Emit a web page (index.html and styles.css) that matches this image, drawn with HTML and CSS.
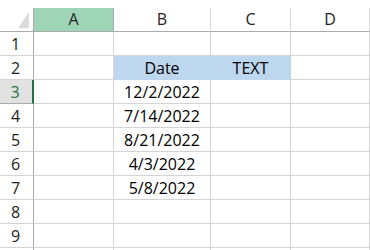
FILE: index.html
```html
<!DOCTYPE html>
<html>
<head>
<meta charset="utf-8">
<link rel="stylesheet" href="styles.css">
</head>
<body>
<div class="sheet">
  <div class="corner"><span class="tri"></span></div>
  <div class="colhdr sel">A</div>
  <div class="colhdr">B</div>
  <div class="colhdr">C</div>
  <div class="colhdr">D</div>

  <div class="rowhdr">1</div>
  <div class="cell"></div><div class="cell"></div><div class="cell"></div><div class="cell"></div>

  <div class="rowhdr">2</div>
  <div class="cell"></div><div class="cell blue">Date</div><div class="cell blue">TEXT</div><div class="cell"></div>

  <div class="rowhdr active">3</div>
  <div class="cell"></div><div class="cell">12/2/2022</div><div class="cell"></div><div class="cell"></div>

  <div class="rowhdr">4</div>
  <div class="cell"></div><div class="cell">7/14/2022</div><div class="cell"></div><div class="cell"></div>

  <div class="rowhdr">5</div>
  <div class="cell"></div><div class="cell">8/21/2022</div><div class="cell"></div><div class="cell"></div>

  <div class="rowhdr">6</div>
  <div class="cell"></div><div class="cell">4/3/2022</div><div class="cell"></div><div class="cell"></div>

  <div class="rowhdr">7</div>
  <div class="cell"></div><div class="cell">5/8/2022</div><div class="cell"></div><div class="cell"></div>

  <div class="rowhdr">8</div>
  <div class="cell"></div><div class="cell"></div><div class="cell"></div><div class="cell"></div>

  <div class="rowhdr">9</div>
  <div class="cell"></div><div class="cell"></div><div class="cell"></div><div class="cell"></div>

  <div class="rowhdr"></div>
  <div class="cell"></div><div class="cell"></div><div class="cell"></div><div class="cell"></div>
</div>
</body>
</html>
```
FILE: styles.css
```css
html, body {
  margin: 0;
  padding: 0;
  background: #ffffff;
  overflow: hidden;
}
body {
  width: 370px;
  height: 250px;
}
.sheet {
  box-sizing: border-box;
  height: 250px;
  overflow: hidden;
  padding-top: 8px;
  display: grid;
  grid-template-columns: 34px 80px 97px 80px 79px;
  grid-auto-rows: 24px;
  font-family: "Open Sans", "Noto Sans", sans-serif;
  font-size: 16px;
  color: #000;
}
.sheet > div {
  box-sizing: border-box;
}
.corner {
  border-right: 1px solid #ababab;
  border-bottom: 1px solid #ababab;
  position: relative;
}
.tri {
  position: absolute;
  right: 4px;
  bottom: 3px;
  width: 0;
  height: 0;
  border-left: 11px solid transparent;
  border-bottom: 16px solid #dcdcdc;
}
.colhdr {
  border-right: 1px solid #dadada;
  border-bottom: 1px solid #ababab;
  display: flex;
  align-items: center;
  justify-content: center;
  color: #222;
  font-size: 16px;
  line-height: 22px;
  padding-bottom: 1px;
}
.colhdr.sel {
  background: #9fd5b7;
  border-right-color: #ababab;
}
.rowhdr {
  border-right: 1px solid #ababab;
  border-bottom: 1px solid #d4d4d4;
  display: flex;
  align-items: center;
  justify-content: center;
  color: #222;
  font-size: 16px;
  line-height: 22px;
  padding-right: 2px;
}
.rowhdr.active {
  background: #e1e1e1;
  color: #217346;
  border-right: 2px solid #217346;
  border-bottom-color: #ababab;
}
.cell {
  border-right: 1px solid #d4d4d4;
  border-bottom: 1px solid #d4d4d4;
  display: flex;
  align-items: flex-end;
  justify-content: center;
  line-height: 22px;
}
.cell.blue {
  background: #bdd7ee;
  border-right-color: #bdd7ee;
  border-bottom-color: #bdd7ee;
}
```
